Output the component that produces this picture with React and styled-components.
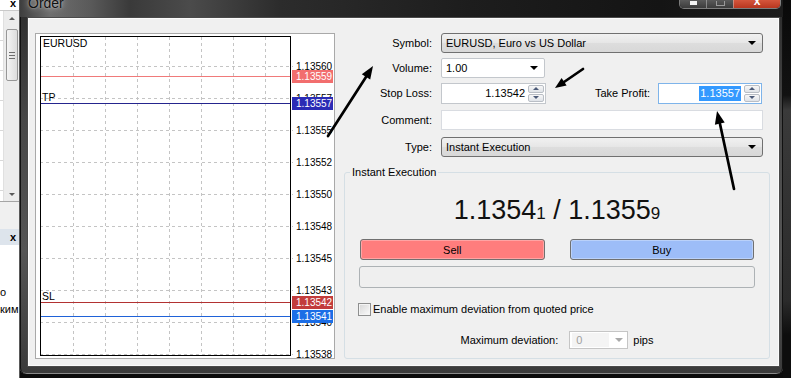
import React from 'react'
import styled, {createGlobalStyle} from 'styled-components'

const GlobalStyle = createGlobalStyle`
html, body {
  margin: 0;
  padding: 0;
  background: #0b0b0b;
  overflow: hidden;
}
body {
  font-family: "Liberation Sans", Arial, sans-serif;
  font-size: 11px;
  color: #000;
}
`

const Desktop = styled.div`
position: relative;
display: flex;
width: 791px;
height: 378px;
overflow: hidden;
background: #0b0b0b;
`

// the terminal window peeking out on the left
const Strip = styled.div`
width: 19px;
flex: none;
display: flex;
flex-direction: column;
background: #fff;
border-right: 1px solid #5a5a5a;
`
const StripHead = styled.div`
height: 10px;
display: flex;
justify-content: flex-end;
padding-right: 3px;
border-bottom: 1px solid #c9c9c9;
font-weight: bold;
font-size: 11px;
line-height: 6px;
`
const ListPane = styled.div`
height: 190px;
display: flex;
`
const ListCells = styled.div`
flex: 1;
background: repeating-linear-gradient(180deg, transparent 0 29px, #d8d8d8 29px 30px);
`
const Scrollbar = styled.div`
width: 15px;
display: flex;
flex-direction: column;
align-items: center;
background: #ececec;
border-left: 1px solid #e0e0e0;
`
const ScrollArrow = styled.div`
height: 14px;
width: 100%;
display: flex;
align-items: center;
justify-content: center;
&::after {
  content: '';
  border-left: 3px solid transparent;
  border-right: 3px solid transparent;
  ${p => p.$down ? 'border-top: 3px solid #5a5a5a;' : 'border-bottom: 3px solid #5a5a5a;'}
}
`
const Thumb = styled.div`
margin-top: 4px;
width: 12px;
height: 52px;
box-sizing: border-box;
border: 1px solid #979797;
border-radius: 2px;
background: linear-gradient(90deg, #f4f4f4, #dcdcdc);
display: flex;
align-items: center;
justify-content: center;
&::after {
  content: '';
  width: 6px;
  height: 7px;
  background: repeating-linear-gradient(180deg, #6d6d6d 0 1px, transparent 1px 3px);
}
`
const Track = styled.div`
flex: 1;
`
const StripGap = styled.div`
height: 27px;
background: #f0f0f0;
border-top: 1px solid #a5a5a5;
`
const PanelHead = styled.div`
height: 16px;
display: flex;
justify-content: flex-end;
align-items: center;
padding-right: 3px;
background: #dde4ec;
font-weight: bold;
`
const PanelBody = styled.div`
flex: 1;
padding-top: 39px;
`
const StripLine = styled.div`
line-height: 17px;
text-align: right;
white-space: nowrap;
padding-right: ${p => p.$pr}px;
`

// Order dialog
const Window = styled.div`
width: 763px;
height: 374px;
flex: none;
display: flex;
flex-direction: column;
background: linear-gradient(180deg, #2c2c2c 0, #474747 120px, #555 250px, #3a3a3a 100%);
box-shadow: inset 1px 0 0 #111, inset -1px 0 0 #111, inset 0 -1px 0 #8a8a8a;
border-radius: 0 0 6px 6px;
`
const TitleBar = styled.div`
height: 17px;
flex: none;
display: flex;
align-items: flex-start;
justify-content: space-between;
background: linear-gradient(90deg, #3e3e3e 0, #6e6e6e 30px, #5a5a5a 70px, #3a3a3a 110px, #4b4b4b 170px, #2c2c2c 260px, #1d1d1d 450px, #141414 640px, #1c1c1c 100%);
`
const Title = styled.div`
margin: -5px 0 0 8px;
font-size: 14px;
color: #111;
text-shadow: 0 0 6px rgba(255,255,255,.7), 0 0 2px rgba(255,255,255,.5);
`
const WinButtons = styled.div`
display: flex;
margin-right: 2px;
border: 1px solid rgba(210,210,210,.55);
border-top: 0;
border-radius: 0 0 5px 5px;
overflow: hidden;
`
const WinButton = styled.div`
width: ${p => p.$w}px;
height: 8px;
display: flex;
justify-content: center;
align-items: flex-start;
background: ${p => p.$close ? 'linear-gradient(180deg, #d4563c, #b8361f)' : 'linear-gradient(180deg, #5a5a5a, #3c3c3c)'};
border-left: ${p => p.$first ? '0' : '1px solid rgba(200,200,200,.5)'};
color: #fff;
font-weight: bold;
font-size: 12px;
line-height: 2px;
`
const MinGlyph = styled.div`
width: 7px;
height: 4px;
margin-top: 1px;
background: #f4f4f4;
`
const MaxGlyph = styled.div`
width: 7px;
height: 4px;
margin-top: 1px;
border: 1px solid #999;
border-top: 0;
`
const Client = styled.div`
margin: 0 3px 0 7px;
height: 350px;
flex: none;
box-sizing: border-box;
display: flex;
align-items: flex-start;
gap: 9px;
padding: 15px 0 0 7px;
background: #f0f0f0;
border: 1px solid #4a4a4a;
box-shadow: inset 0 0 0 1px #fbfbfb;
`
const ChartBox = styled.div`
width: 300px;
height: 326px;
flex: none;
box-sizing: border-box;
border: 1px solid #a9a9a9;
background: #fff;
svg {
  display: block;
}
`
const Form = styled.div`
width: 426px;
flex: none;
display: flex;
flex-direction: column;
`
const Row = styled.div`
display: flex;
align-items: center;
height: 20px;
margin-top: ${p => p.$mt || 0}px;
`
const Label = styled.div`
width: ${p => p.$w || 88}px;
flex: none;
margin-right: ${p => p.$gap || 9}px;
text-align: right;
`
const Combo = styled.div`
box-sizing: border-box;
height: 20px;
width: ${p => p.$w}px;
flex: none;
display: flex;
align-items: center;
padding: 0 6px 0 4px;
border: 1px solid ${p => p.$plain ? '#c3c7cc' : '#707070'};
border-radius: ${p => p.$plain ? 2 : 3}px;
background: ${p => p.$plain ? '#fff' : 'linear-gradient(180deg, #f1f1f1 0, #e6e6e6 50%, #dddddd 51%, #d8d8d8 100%)'};
`
const ComboText = styled.div`
flex: 1;
white-space: nowrap;
`
const DropArrow = styled.div`
width: 0;
height: 0;
border-left: 4px solid transparent;
border-right: 4px solid transparent;
border-top: 4px solid ${p => p.$muted ? '#a9a9a9' : '#000'};
`
const SpinField = styled.div`
width: ${p => p.$w}px;
height: 21px;
flex: none;
display: flex;
align-items: stretch;
`
const SpinValue = styled.div`
flex: 1;
box-sizing: border-box;
display: flex;
align-items: center;
justify-content: flex-end;
padding-right: 3px;
background: #fff;
border: 1px solid ${p => p.$focus ? '#7eb4ea' : '#c3c7cc'};
border-right: 0;
`
const Selected = styled.span`
background: #3399ff;
color: #fff;
line-height: 15px;
padding: 0 1px;
`
const Spinner = styled.div`
width: 18px;
display: flex;
flex-direction: column;
gap: 1px;
padding: 1px 1px 1px 0;
box-sizing: border-box;
background: #fff;
border: 1px solid ${p => p.$focus ? '#7eb4ea' : '#c3c7cc'};
border-left: 0;
`
const SpinButton = styled.div`
flex: 1;
display: flex;
align-items: center;
justify-content: center;
border: 1px solid #b9bec5;
border-radius: 2px;
background: linear-gradient(180deg, #f7f7f7, #dfe3e8);
&::after {
  content: '';
  border-left: 3px solid transparent;
  border-right: 3px solid transparent;
  ${p => p.$down ? 'border-top: 3px solid #4c5b78;' : 'border-bottom: 3px solid #4c5b78;'}
}
`
const TextInput = styled.div`
box-sizing: border-box;
width: 322px;
height: 20px;
background: #fff;
border: 1px solid #d9dce1;
`
const Group = styled.fieldset`
margin: 9px 0 0;
padding: 0 15px 9px;
width: 426px;
min-width: 0;
box-sizing: border-box;
border: 1px solid #d5dfe5;
border-radius: 3px;
`
const Legend = styled.legend`
margin-left: -10px;
padding: 0 2px;
font-size: 11px;
line-height: 13px;
`
const Quote = styled.div`
margin-top: 14px;
height: 34px;
line-height: 34px;
text-align: center;
font-size: 27px;
color: #111;
white-space: nowrap;
`
const Pip = styled.span`
font-size: 17px;
`
const Trades = styled.div`
display: grid;
grid-template-columns: 1fr 1fr;
column-gap: 25px;
margin-top: 12px;
`
const TradeButton = styled.div`
height: 21px;
box-sizing: border-box;
display: flex;
align-items: center;
justify-content: center;
border: 1px solid #707070;
border-radius: 3px;
background: ${p => p.$bg};
box-shadow: inset 0 0 0 1px rgba(255,255,255,.3);
`
const WideButton = styled.div`
height: 22px;
margin: 6px -1px 0;
box-sizing: border-box;
border: 1px solid #adb2b5;
border-radius: 3px;
background: #efefef;
`
const CheckRow = styled.div`
display: flex;
align-items: center;
height: 14px;
margin: 14px 0 0 -2px;
`
const CheckBox = styled.div`
width: 13px;
height: 13px;
margin-right: 2px;
box-sizing: border-box;
border: 1px solid #8e8f8f;
background: linear-gradient(135deg, #d6d6d6, #fbfbfb);
box-shadow: inset 0 0 0 1px #f4f4f4;
`
const DevRow = styled.div`
display: flex;
align-items: center;
justify-content: center;
height: 19px;
margin-top: 14px;
`
const DevField = styled.div`
width: 59px;
height: 18px;
margin: 0 5px 0 11px;
box-sizing: border-box;
display: flex;
align-items: center;
padding: 0 4px 0 2px;
background: #fff;
border: 1px solid #c5c5c5;
`
const DevValue = styled.div`
flex: 1;
align-self: stretch;
display: flex;
align-items: center;
padding-left: 4px;
margin: 1px 6px 1px 0;
background: #f4f4f4;
color: #a0a0a0;
`
const RightStrip = styled.div`
flex: 1;
background: linear-gradient(180deg, #090909 0, #121212 95px, #3a3a3a 110px, #2b2b2b 300px, #0d0d0d 335px);
`
const Notes = styled.svg`
position: absolute;
left: 0;
top: 0;
pointer-events: none;
`

const gridX = [37, 69, 101, 133, 165, 197, 229]
const levels = ['1.13560', '1.13557', '1.13555', '1.13552', '1.13550', '1.13548', '1.13545', '1.13543', '1.13540', '1.13538']
const marks = [
  {y: 42, line: '#f07a7a', bg: '#f26e6e', text: '1.13559'},
  {y: 69, line: '#25258e', bg: '#2b2bb5', text: '1.13557'},
  {y: 268, line: '#b23232', bg: '#c23c3c', text: '1.13542'},
  {y: 282, line: '#1f62d8', bg: '#1c6ee6', text: '1.13541'},
]
const font = '"Liberation Sans", Arial, sans-serif'

const Chart = () => (
  <svg width="298" height="324" fontFamily={font}>
    {gridX.map(x => (
      <line key={x} x1={x + .5} y1="3" x2={x + .5} y2="321" stroke="#c4c4c4" strokeDasharray="3 3"/>
    ))}
    {levels.map((l, i) => (
      <g key={l}>
        <line x1="4" y1={32 + 32 * i + .5} x2="257" y2={32 + 32 * i + .5} stroke="#c4c4c4" strokeDasharray="3 3"/>
        <text x="260" y={32 + 32 * i + 4} fontSize="10" fill="#000">{l}</text>
      </g>
    ))}
    <rect x="4.5" y="2.5" width="250" height="319" fill="none" stroke="#000"/>
    {marks.map(m => (
      <g key={m.text}>
        <line x1="5" y1={m.y + .5} x2="254" y2={m.y + .5} stroke={m.line}/>
        <rect x="256" y={m.y - 6} width="41" height="13" fill={m.bg}/>
        <text x="260" y={m.y + 4} fontSize="10" fill="#fff">{m.text}</text>
      </g>
    ))}
    <text x="7" y="13" fontSize="10.5">EURUSD</text>
    <text x="6" y="67" fontSize="10.5">TP</text>
    <text x="6" y="266" fontSize="10.5">SL</text>
  </svg>
)

const Spin = ({w, value, focus}) => (
  <SpinField $w={w}>
    <SpinValue $focus={focus}>{focus ? <Selected>{value}</Selected> : value}</SpinValue>
    <Spinner $focus={focus}>
      <SpinButton/>
      <SpinButton $down/>
    </Spinner>
  </SpinField>
)

const Arrow = ({tail, base, head}) => (
  <g>
    <line x1={tail[0]} y1={tail[1]} x2={base[0]} y2={base[1]} stroke="#000" strokeWidth="2.7" strokeLinecap="round"/>
    <polygon points={head} fill="#000"/>
  </g>
)

export default function App() {
  return (
    <Desktop>
      <GlobalStyle/>
      <Strip>
        <StripHead>x</StripHead>
        <ListPane>
          <ListCells/>
          <Scrollbar>
            <ScrollArrow/>
            <Thumb/>
            <Track/>
            <ScrollArrow $down/>
          </Scrollbar>
        </ListPane>
        <StripGap/>
        <PanelHead>x</PanelHead>
        <PanelBody>
          <StripLine $pr={14}>о</StripLine>
          <StripLine $pr={1}>ким</StripLine>
        </PanelBody>
      </Strip>

      <Window>
        <TitleBar>
          <Title>Order</Title>
          <WinButtons>
            <WinButton $w={26} $first><MinGlyph/></WinButton>
            <WinButton $w={26}><MaxGlyph/></WinButton>
            <WinButton $w={46} $close>x</WinButton>
          </WinButtons>
        </TitleBar>
        <Client>
          <ChartBox>
            <Chart/>
          </ChartBox>
          <Form>
            <Row>
              <Label>Symbol:</Label>
              <Combo $w={322}><ComboText>EURUSD, Euro vs US Dollar</ComboText><DropArrow/></Combo>
            </Row>
            <Row $mt={5}>
              <Label>Volume:</Label>
              <Combo $w={104} $plain><ComboText>1.00</ComboText><DropArrow/></Combo>
            </Row>
            <Row $mt={5}>
              <Label>Stop Loss:</Label>
              <Spin w={105} value="1.13542"/>
              <Label $w={104} $gap={8}>Take Profit:</Label>
              <Spin w={104} value="1.13557" focus/>
            </Row>
            <Row $mt={7}>
              <Label>Comment:</Label>
              <TextInput/>
            </Row>
            <Row $mt={7}>
              <Label>Type:</Label>
              <Combo $w={322}><ComboText>Instant Execution</ComboText><DropArrow/></Combo>
            </Row>
            <Group>
              <Legend>Instant Execution</Legend>
              <Quote>1.1354<Pip>1</Pip> / 1.1355<Pip>9</Pip></Quote>
              <Trades>
                <TradeButton $bg="#ff7d7d">Sell</TradeButton>
                <TradeButton $bg="#9dbdf8">Buy</TradeButton>
              </Trades>
              <WideButton/>
              <CheckRow>
                <CheckBox/>
                Enable maximum deviation from quoted price
              </CheckRow>
              <DevRow>
                Maximum deviation:
                <DevField>
                  <DevValue>0</DevValue>
                  <DropArrow $muted/>
                </DevField>
                pips
              </DevRow>
            </Group>
          </Form>
        </Client>
      </Window>
      <RightStrip/>

      <Notes width="791" height="378">
        <Arrow tail={[328, 136]} base={[366, 77]} head="373,66 370.2,79.6 361.8,74.2"/>
        <Arrow tail={[583, 69]} base={[564, 82]} head="555,88 566.6,85.5 561.6,78.1"/>
        <Arrow tail={[734, 189]} base={[720, 124]} head="717,111 724.7,122.6 714.9,124.8"/>
      </Notes>
    </Desktop>
  )
}
